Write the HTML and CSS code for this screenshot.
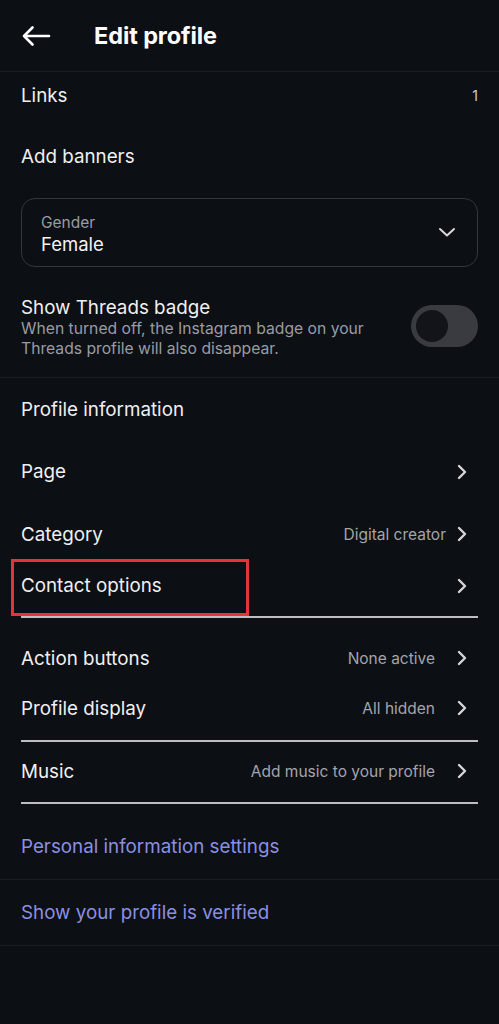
FILE: index.html
```html
<!DOCTYPE html>
<html>
<head>
<meta charset="utf-8">
<link rel="stylesheet" href="styles.css">
</head>
<body>
<div class="screen">
  <header class="header">
    <svg class="back" width="30" height="22" viewBox="0 0 30 22"><path d="M28 11H3M11.5 2.5L3 11l8.5 8.5" fill="none" stroke="#fff" stroke-width="2.6" stroke-linecap="round" stroke-linejoin="round"/></svg>
    <h1 class="title">Edit profile</h1>
  </header>

  <div class="row links"><span class="label">Links</span><span class="count">1</span></div>
  <div class="row banners"><span class="label">Add banners</span></div>

  <div class="select">
    <div class="select-text">
      <span class="select-label">Gender</span>
      <span class="select-value">Female</span>
    </div>
    <svg class="chev-down" width="18" height="12" viewBox="0 0 18 12"><path d="M2 3l7 6.5L16 3" fill="none" stroke="#d8d8d8" stroke-width="2" stroke-linecap="round" stroke-linejoin="round"/></svg>
  </div>

  <div class="badge-row">
    <div class="badge-text">
      <div class="label">Show Threads badge</div>
      <div class="desc">When turned off, the Instagram badge on your<br>Threads profile will also disappear.</div>
    </div>
    <div class="toggle"><div class="knob"></div></div>
  </div>

  <div class="sep-faint sep-a"></div>

  <div class="row r-info"><span class="label">Profile information</span></div>
  <div class="row r-page"><span class="label">Page</span><span class="chev"><svg width="12" height="16" viewBox="0 0 12 16"><path d="M3 2l6 6-6 6" fill="none" stroke="#d6d6d6" stroke-width="2.4" stroke-linecap="round" stroke-linejoin="round"/></svg></span></div>
  <div class="row r-cat"><span class="label">Category</span><span class="value value-tight">Digital creator</span><span class="chev"><svg width="12" height="16" viewBox="0 0 12 16"><path d="M3 2l6 6-6 6" fill="none" stroke="#d6d6d6" stroke-width="2.4" stroke-linecap="round" stroke-linejoin="round"/></svg></span></div>
  <div class="row r-contact"><span class="label">Contact options</span><span class="chev"><svg width="12" height="16" viewBox="0 0 12 16"><path d="M3 2l6 6-6 6" fill="none" stroke="#d6d6d6" stroke-width="2.4" stroke-linecap="round" stroke-linejoin="round"/></svg></span><div class="highlight"></div></div>

  <div class="sep-light sep-b"></div>

  <div class="row r-action"><span class="label">Action buttons</span><span class="value">None active</span><span class="chev"><svg width="12" height="16" viewBox="0 0 12 16"><path d="M3 2l6 6-6 6" fill="none" stroke="#d6d6d6" stroke-width="2.4" stroke-linecap="round" stroke-linejoin="round"/></svg></span></div>
  <div class="row r-display"><span class="label">Profile display</span><span class="value">All hidden</span><span class="chev"><svg width="12" height="16" viewBox="0 0 12 16"><path d="M3 2l6 6-6 6" fill="none" stroke="#d6d6d6" stroke-width="2.4" stroke-linecap="round" stroke-linejoin="round"/></svg></span></div>

  <div class="sep-light sep-c"></div>

  <div class="row r-music"><span class="label">Music</span><span class="value">Add music to your profile</span><span class="chev"><svg width="12" height="16" viewBox="0 0 12 16"><path d="M3 2l6 6-6 6" fill="none" stroke="#d6d6d6" stroke-width="2.4" stroke-linecap="round" stroke-linejoin="round"/></svg></span></div>

  <div class="sep-light sep-d"></div>

  <div class="row r-personal"><span class="label link">Personal information settings</span></div>
  <div class="sep-faint"></div>
  <div class="row r-verified"><span class="label link">Show your profile is verified</span></div>
  <div class="sep-faint"></div>
</div>
</body>
</html>
```

FILE: styles.css
```css
html, body {
  margin: 0;
  padding: 0;
  background: #0c0f14;
}
body {
  font-family: Inter, "Noto Sans", "Liberation Sans", sans-serif;
  color: #f0f0f2;
}
.screen {
  width: 499px;
  min-height: 1024px;
  background: #0c0f14;
}
.header {
  height: 72px;
  display: flex;
  align-items: center;
  border-bottom: 1px solid #1a1d23;
  box-sizing: border-box;
  padding-left: 21px;
}
.back {
  display: block;
  margin-top: 1px;
}
.title {
  margin: 0 0 0 43px;
  font-size: 23.5px;
  font-weight: 700;
  letter-spacing: -0.1px;
  color: #ffffff;
}
.row {
  display: flex;
  align-items: center;
  padding: 0 31px 0 21px;
  position: relative;
}
.label {
  font-size: 18.8px;
  color: #f0f0f2;
  flex: 1;
}
.count {
  font-size: 14px;
  color: #d0d0d4;
  margin-right: -10px;
}
.links { height: 46px; }
.banners { height: 77px; }

.select {
  margin: 3px 21px 0;
  height: 69px;
  box-sizing: border-box;
  border: 1px solid #33363d;
  border-radius: 14px;
  display: flex;
  align-items: center;
  padding: 4px 21px 0 19px;
}
.select-text {
  flex: 1;
  display: flex;
  flex-direction: column;
}
.select-label {
  font-size: 15.5px;
  color: #9a9ca3;
  line-height: 19px;
}
.select-value {
  font-size: 18.5px;
  color: #f4f4f6;
  line-height: 24px;
}
.chev-down { display: block; margin-top: -6px; }

.badge-row {
  display: flex;
  align-items: center;
  padding: 30px 21px 0;
}
.badge-text { flex: 1; }
.badge-text .label {
  line-height: 22px;
}
.desc {
  font-size: 15.7px;
  line-height: 19.5px;
  color: #9a9ca3;
}
.toggle {
  width: 67px;
  height: 42px;
  border-radius: 21px;
  background: #3a3b40;
  display: flex;
  align-items: center;
  padding-left: 5px;
  box-sizing: border-box;
  margin-top: -4px;
}
.knob {
  width: 32px;
  height: 32px;
  border-radius: 50%;
  background: #121419;
}

.sep-faint {
  height: 1px;
  background: #1a1d23;
}
.sep-a { margin-top: 19px; }
.sep-light {
  height: 2px;
  background: #bdbec2;
  margin: 0 21px;
}

.r-info { height: 62px; }
.r-page { height: 63px; }
.r-cat { height: 62px; }
.r-contact { height: 41px; }
.sep-b { margin-top: 10px; }
.r-action { height: 50px; margin-top: 15px; }
.r-display { height: 50px; }
.sep-c { margin-top: 7px; }
.r-music { height: 58px; }
.sep-d { margin-top: 2px; }
.r-personal { height: 65px; margin-top: 10px; }
.r-verified { height: 65px; }

.value {
  font-size: 15.5px;
  color: #a3a5aa;
  margin-right: 21px;
}
.value-tight { margin-right: 10px; }
.chev {
  display: flex;
  width: 12px;
}
.chev svg { display: block; }

.highlight {
  position: absolute;
  left: 11px;
  top: -6px;
  width: 238px;
  height: 57px;
  border: 3px solid #e3343a;
  box-sizing: border-box;
}
.link {
  color: #8a8fe4;
}
```
